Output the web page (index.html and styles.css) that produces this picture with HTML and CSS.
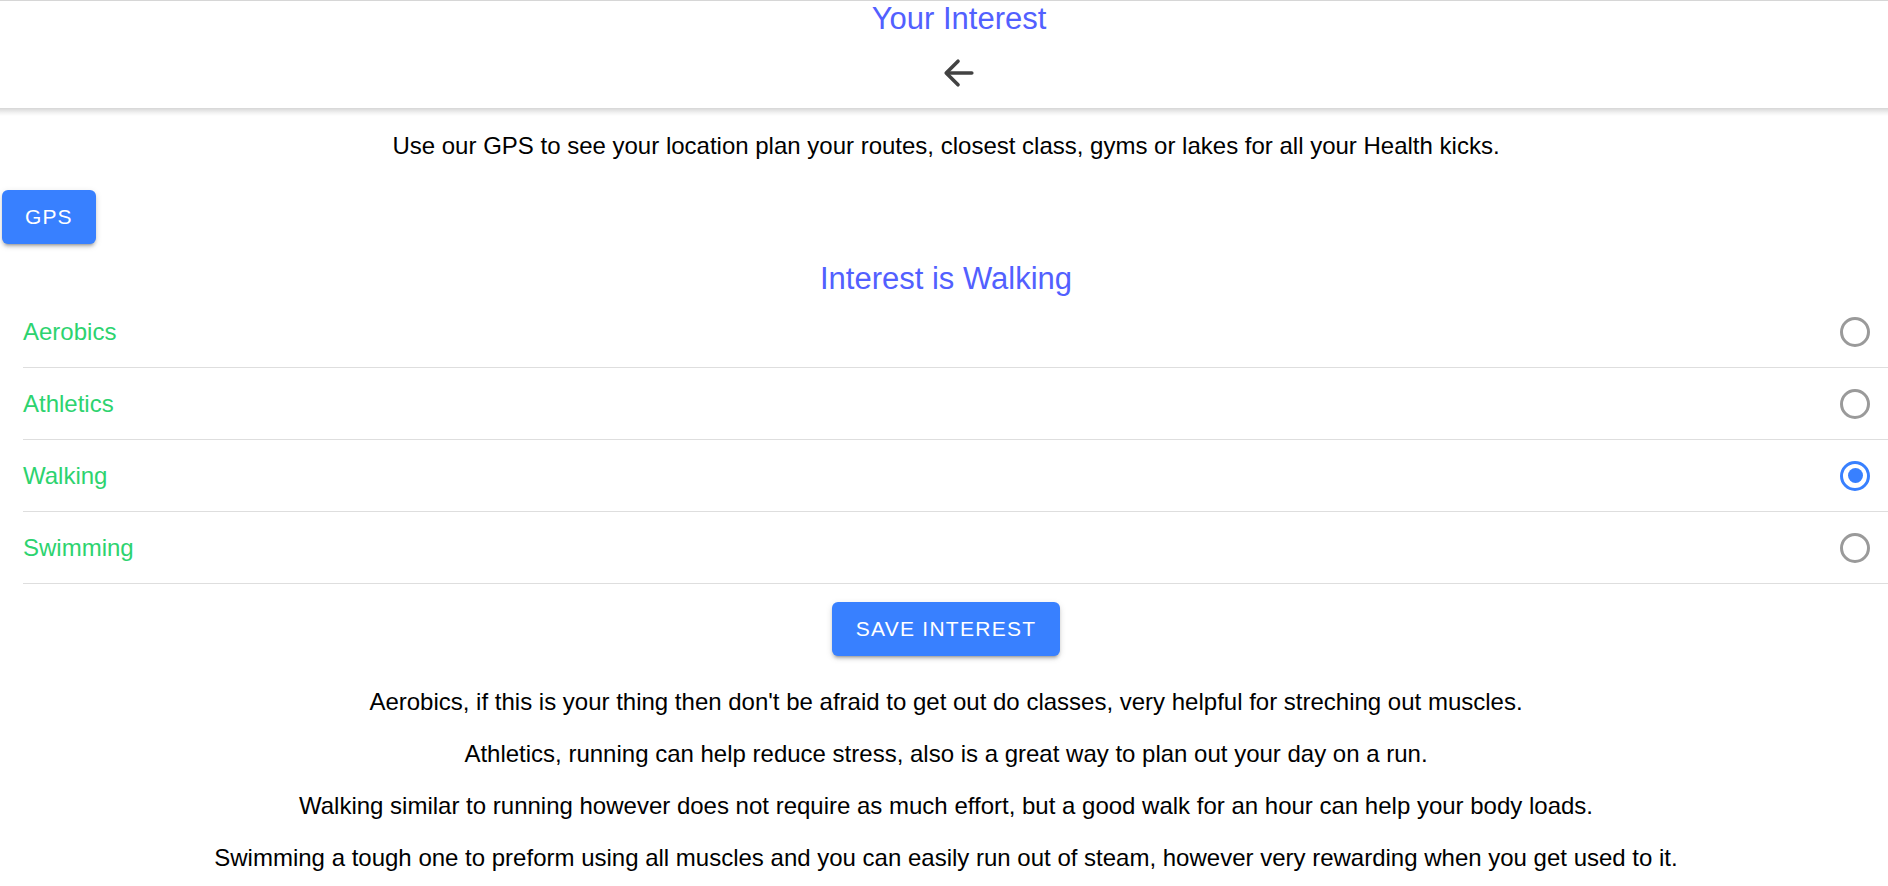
FILE: index.html
```html
<!DOCTYPE html>
<html lang="en">
<head>
<meta charset="utf-8">
<title>Your Interest</title>
<link rel="stylesheet" href="styles.css">
</head>
<body>
<header class="header">
  <div class="title">Your Interest</div>
  <button class="back" aria-label="Back">
    <svg class="back-icon" viewBox="0 0 512 512" aria-hidden="true">
      <polyline points="244 400 100 256 244 112" fill="none" stroke="currentColor" stroke-width="44" stroke-linecap="round" stroke-linejoin="round"/>
      <line x1="120" y1="256" x2="412" y2="256" fill="none" stroke="currentColor" stroke-width="44" stroke-linecap="round"/>
    </svg>
  </button>
</header>
<main class="content">
  <p class="text">Use our GPS to see your location plan your routes, closest class, gyms or lakes for all your Health kicks.</p>
  <div class="gps-row"><button class="btn">GPS</button></div>
  <h2 class="heading">Interest is Walking</h2>
  <ul class="list">
    <li class="item"><span class="label">Aerobics</span><span class="radio"></span></li>
    <li class="item"><span class="label">Athletics</span><span class="radio"></span></li>
    <li class="item"><span class="label">Walking</span><span class="radio checked"></span></li>
    <li class="item"><span class="label">Swimming</span><span class="radio"></span></li>
  </ul>
  <div class="save-row"><button class="btn">Save Interest</button></div>
  <p class="text">Aerobics, if this is your thing then don't be afraid to get out do classes, very helpful for streching out muscles.</p>
  <p class="text">Athletics, running can help reduce stress, also is a great way to plan out your day on a run.</p>
  <p class="text">Walking similar to running however does not require as much effort, but a good walk for an hour can help your body loads.</p>
  <p class="text">Swimming a tough one to preform using all muscles and you can easily run out of steam, however very rewarding when you get used to it.</p>
</main>
</body>
</html>
```
FILE: styles.css
```css
html, body {
  margin: 0;
  padding: 0;
  background: #ffffff;
  font-family: "Liberation Sans", Arial, sans-serif;
  color: #000000;
  overflow: hidden;
}

.header {
  position: relative;
  height: 107px;
  border-top: 1px solid #d6d6d6;
  background: #ffffff;
  display: flex;
  flex-direction: column;
  align-items: center;
  padding-left: 30px;
}

.header::after {
  content: "";
  position: absolute;
  left: 0;
  right: 0;
  bottom: -8px;
  height: 8px;
  background: linear-gradient(to bottom, rgba(0, 0, 0, 0.16), rgba(0, 0, 0, 0.05) 60%, rgba(0, 0, 0, 0));
}

.title {
  margin-top: 1px;
  font-size: 31px;
  line-height: 34px;
  color: #5260ff;
}

.back {
  margin-top: 13px;
  width: 48px;
  height: 48px;
  padding: 0;
  border: 0;
  background: transparent;
  color: #424242;
  display: flex;
  align-items: center;
  justify-content: center;
}

.back-icon {
  width: 42px;
  height: 42px;
}

.content {
  display: flex;
  flex-direction: column;
}

.text {
  margin: 24px 0 0;
  padding-left: 4px;
  font-size: 24px;
  line-height: 28px;
  text-align: center;
}

.gps-row {
  display: flex;
  padding: 30px 0 0 2px;
}

.btn {
  height: 54px;
  padding: 0 24px;
  border: 0;
  border-radius: 6px;
  background: #3880ff;
  color: #ffffff;
  font-family: "Liberation Sans", Arial, sans-serif;
  font-size: 21px;
  font-weight: 400;
  letter-spacing: 0.06em;
  text-transform: uppercase;
  box-shadow: 0 4px 2px -3px rgba(0, 0, 0, 0.2), 0 3px 3px 0 rgba(0, 0, 0, 0.14), 0 2px 7px 0 rgba(0, 0, 0, 0.12);
}

.gps-row .btn {
  padding: 0 23px;
  letter-spacing: 0.05em;
}

.heading {
  margin: 18px 0 0;
  padding-left: 4px;
  font-size: 31px;
  line-height: 34px;
  font-weight: 400;
  color: #5260ff;
  text-align: center;
}

.list {
  list-style: none;
  margin: 0;
  padding: 0 0 0 23px;
}

.item {
  height: 71px;
  border-bottom: 1px solid #dedede;
  display: flex;
  align-items: center;
  justify-content: space-between;
  padding-right: 18px;
}

.label {
  font-size: 24px;
  line-height: 28px;
  color: #2dd36f;
}

.radio {
  box-sizing: border-box;
  width: 30px;
  height: 30px;
  border: 3px solid #9a9a9a;
  border-radius: 50%;
  display: flex;
  align-items: center;
  justify-content: center;
}

.radio.checked {
  border-color: #3880ff;
}

.radio.checked::after {
  content: "";
  width: 15px;
  height: 15px;
  border-radius: 50%;
  background: #3880ff;
}

.save-row {
  display: flex;
  justify-content: center;
  padding: 18px 0 0 4px;
}

.save-row + .text {
  margin-top: 32px;
}
```
